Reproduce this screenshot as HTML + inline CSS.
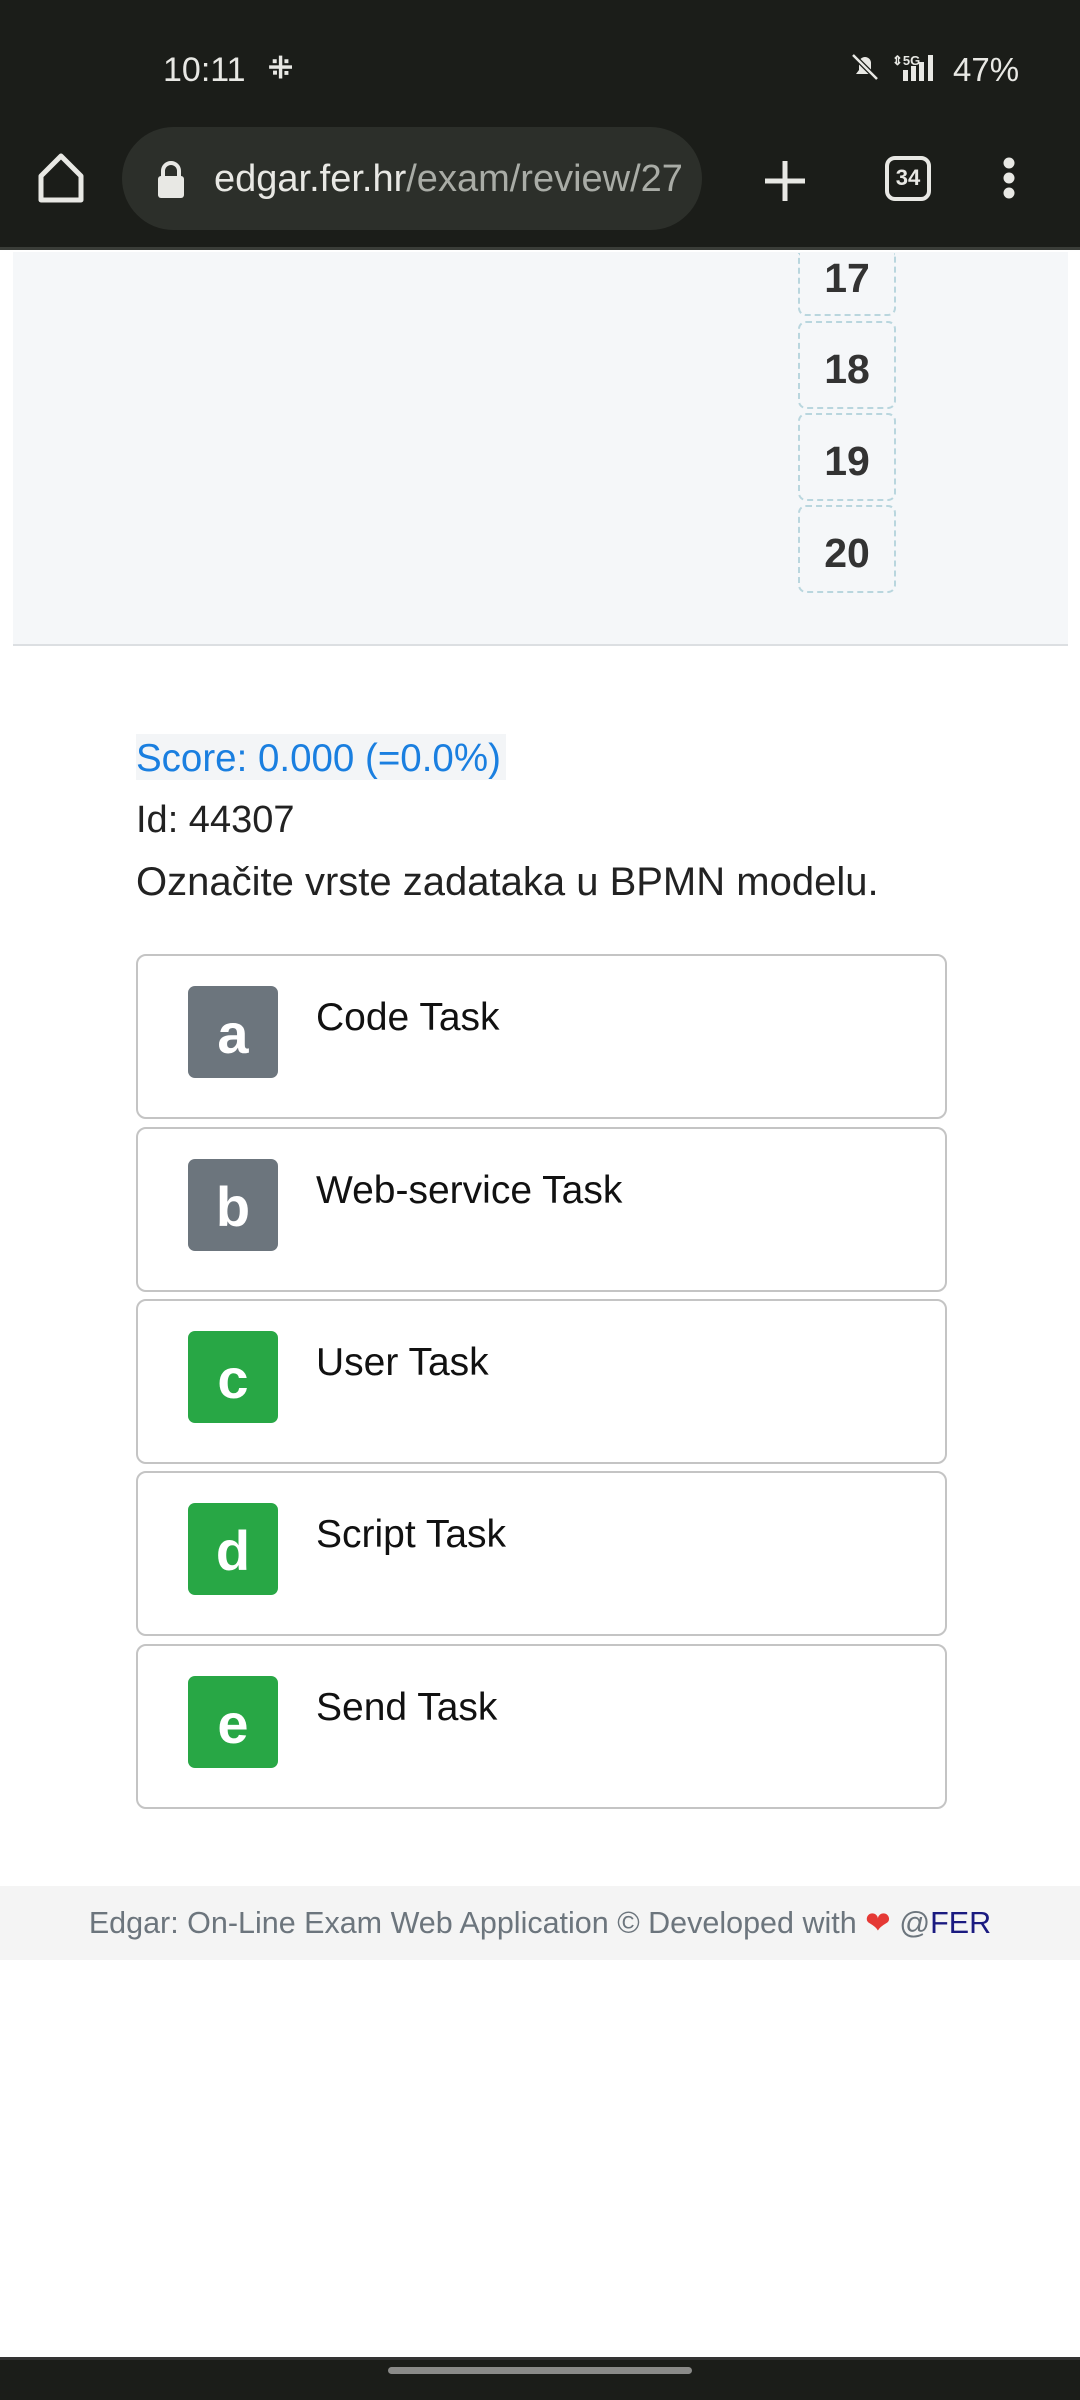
<!DOCTYPE html>
<html><head><meta charset="utf-8"><style>
*{margin:0;padding:0;box-sizing:border-box}
body{width:1080px;height:2400px;background:#fff;font-family:"Liberation Sans",sans-serif;position:relative;overflow:hidden}
.abs{position:absolute}
.top{left:0;top:0;width:1080px;height:250px;background:#1b1d19;border-bottom:3px solid #3a3d38}
.w{color:#e8e8e4}
.pill{left:122px;top:127px;width:580px;height:103px;border-radius:52px;background:#2c2f2a}
.panel{left:13px;top:252px;width:1055px;height:394px;background:#f5f7f9;border-bottom:2px solid #dcdfe2}
.num{left:798px;width:98px;height:88px;border:2px dashed #b9d6de;border-radius:8px;text-align:center;font-weight:bold;font-size:41px;color:#333;line-height:92px}
.card{left:136px;width:811px;height:165px;border:2px solid #c4c4c4;border-radius:10px;background:#fff}
.badge{position:absolute;left:50px;top:30px;width:90px;height:92px;border-radius:7px;color:#fff;font-weight:bold;font-size:56px;text-align:center;line-height:96px}
.g{background:#6c757d}.gr{background:#28a745}
.lbl{position:absolute;left:178px;top:40px;font-size:39px;color:#111}
</style></head><body>
<div class="abs top"></div>
<div class="abs w" style="left:163px;top:51px;font-size:34px">10:11</div>
<div class="abs w" style="left:268px;top:51px;font-size:30px;font-weight:bold">⁜</div>
<svg class="abs" style="left:850px;top:50px" width="170" height="34" viewBox="0 0 170 34">
<path d="M6 24h18l-3-4v-7a6 6 0 0 0-12 0v7z M12 27h6" fill="#e8e8e4"/><path d="M3 5l24 24" stroke="#1b1d19" stroke-width="5"/><path d="M3 5l24 24" stroke="#e8e8e4" stroke-width="2.5"/>
<text x="42" y="15" font-size="13" fill="#e8e8e4" font-family="Liberation Sans" font-weight="bold">⇕5G</text>
<rect x="53" y="20" width="5" height="11" fill="#e8e8e4"/><rect x="61" y="16" width="5" height="15" fill="#e8e8e4"/><rect x="69" y="12" width="5" height="19" fill="#e8e8e4"/><rect x="78" y="5" width="5" height="26" fill="#e8e8e4"/>
<text x="103" y="31" font-size="33" fill="#e8e8e4" font-family="Liberation Sans">47%</text>
</svg>
<svg class="abs" style="left:36px;top:152px" width="50" height="52" viewBox="0 0 50 52"><path d="M5 24L25 4 45 24v24H5z" fill="none" stroke="#e8e8e4" stroke-width="5" stroke-linejoin="round"/></svg>
<div class="abs pill"></div>
<svg class="abs" style="left:155px;top:160px" width="32" height="40" viewBox="0 0 32 40"><path d="M8 16v-5a8 8 0 0 1 16 0v5" fill="none" stroke="#e8e8e4" stroke-width="4"/><rect x="3" y="16" width="26" height="22" rx="3" fill="#e8e8e4"/></svg>
<div class="abs" style="left:214px;top:158px;font-size:38px;color:#e8e8e4;white-space:nowrap;width:482px;overflow:hidden">edgar.fer.hr<span style="color:#a9aca6">/exam/review/27</span></div>
<svg class="abs" style="left:762px;top:158px" width="46" height="46"><path d="M23 3v40M3 23h40" stroke="#e8e8e4" stroke-width="5"/></svg>
<div class="abs" style="left:885px;top:156px;width:46px;height:45px;border:4.5px solid #e8e8e4;border-radius:10px;color:#e8e8e4;font-weight:bold;font-size:22px;text-align:center;line-height:36px">34</div>
<svg class="abs" style="left:998px;top:155px" width="24" height="48"><circle cx="11" cy="8" r="5.5" fill="#e8e8e4"/><circle cx="11" cy="23" r="5.5" fill="#e8e8e4"/><circle cx="11" cy="38" r="5.5" fill="#e8e8e4"/></svg>

<div class="abs panel"></div>
<div class="abs num" style="top:253px;height:63px;border-top:none;border-radius:0 0 8px 8px;line-height:50px">17</div>
<div class="abs num" style="top:321px">18</div>
<div class="abs num" style="top:413px">19</div>
<div class="abs num" style="top:505px">20</div>

<div class="abs" style="left:136px;top:734px;width:370px;height:46px;background:#f3f5f7"></div>
<div class="abs" style="left:136px;top:737px;font-size:38.5px;color:#1a7fe0">Score: 0.000 (=0.0%)</div>
<div class="abs" style="left:136px;top:799px;font-size:38px;color:#222">Id: 44307</div>
<div class="abs" style="left:136px;top:860px;font-size:40px;color:#222">Označite vrste zadataka u BPMN modelu.</div>

<div class="abs card" style="top:954px"><div class="badge g">a</div><div class="lbl">Code Task</div></div>
<div class="abs card" style="top:1127px"><div class="badge g">b</div><div class="lbl">Web-service Task</div></div>
<div class="abs card" style="top:1299px"><div class="badge gr">c</div><div class="lbl">User Task</div></div>
<div class="abs card" style="top:1471px"><div class="badge gr">d</div><div class="lbl">Script Task</div></div>
<div class="abs card" style="top:1644px"><div class="badge gr">e</div><div class="lbl">Send Task</div></div>

<div class="abs" style="left:0;top:1886px;width:1080px;height:74px;background:#f4f4f4;text-align:center;font-size:30.5px;line-height:74px;color:#6c757d;white-space:nowrap">Edgar: On-Line Exam Web Application © Developed with <span style="color:#e53935">❤</span> @<span style="color:#1a1a80">FER</span></div>

<div class="abs" style="left:0;top:2357px;width:1080px;height:43px;background:#1b1d19;border-top:3px solid #333"></div>
<div class="abs" style="left:388px;top:2367px;width:304px;height:7px;border-radius:4px;background:#8a8a88"></div>
</body></html>
